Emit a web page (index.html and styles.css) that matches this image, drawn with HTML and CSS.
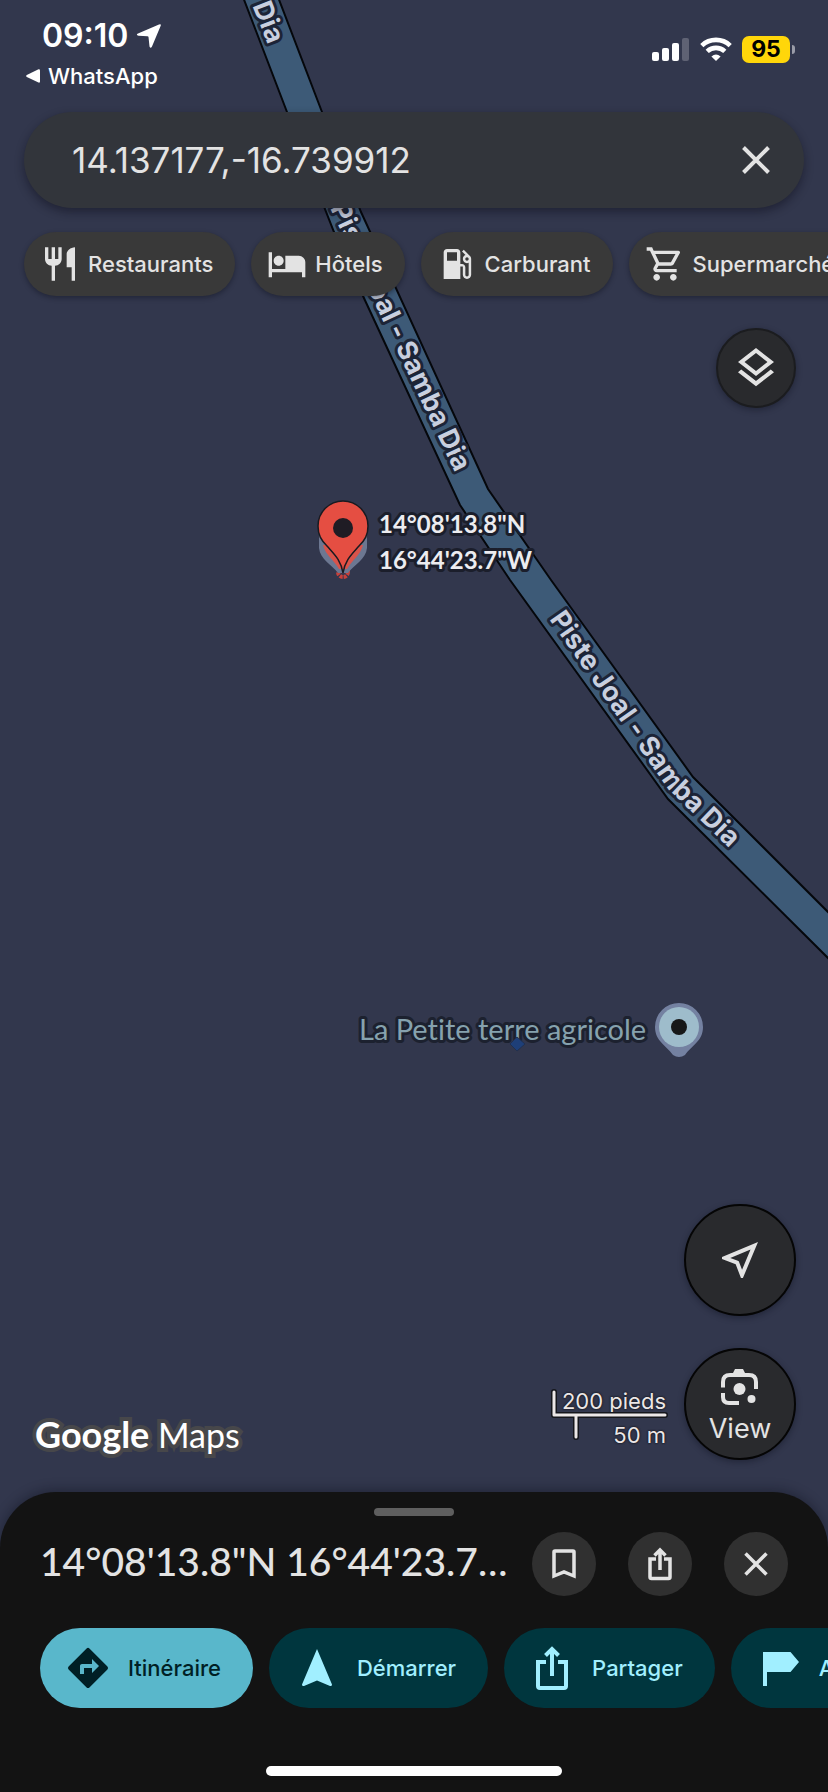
FILE: index.html
```html
<!DOCTYPE html>
<html lang="fr">
<head>
<meta charset="utf-8">
<meta name="viewport" content="width=device-width, initial-scale=1">
<title>Google Maps</title>
<link rel="stylesheet" href="styles.css">
</head>
<body>
<div class="screen">
  <svg class="map" viewBox="0 0 828 1792" preserveAspectRatio="xMinYMin slice" role="img" aria-label="Carte">
    <defs>
      <path id="road-a" d="M232 -46L268 45"/>
      <path id="road-b" d="M330 208L382 319L470 504"/>
      <path id="road-c" d="M549 619L619 719L668 789L748 866"/>
    </defs>
    <path class="road" d="M243 -3L287 112L334 232L363 296L460 505L510 580L668 799L832 962V916L693 777L551 580L488 489L361 212L322 112L278 -3Z"/>
    <text class="road-name"><textPath href="#road-a" startOffset="100%" text-anchor="end">Dia</textPath></text>
    <text class="road-name"><textPath href="#road-b">Piste Joal - Samba Dia</textPath></text>
    <text class="road-name"><textPath href="#road-c">Piste Joal - Samba Dia</textPath></text>

    <circle cx="343" cy="572" r="5" fill="none" stroke="#c8413c" stroke-width="4" stroke-dasharray="3 1"/>
    <path d="M319 536V548C320 559 332 565 338 573H348C354 565 366 559 367 548V536Z" fill="#6c7791"/>
    <path d="M323 545C326 556 334 560 339 569H347C352 560 360 556 363 545Z" fill="#d9534a"/>
    <path d="M343 573C341 560 334 554 327 546C321 540 318 535 318 526A25 25 0 0 1 368 526C368 535 365 540 359 546C352 554 345 560 343 573Z" fill="#e54e42" stroke="#191a20" stroke-width="1.5"/>
    <circle cx="343" cy="528" r="10" fill="#1f1c24"/>
    <text class="pin-name" x="379" y="533">14°08'13.8"N</text>
    <text class="pin-name" x="379" y="569">16°44'23.7"W</text>

    <text class="place-name" x="359" y="1040">La Petite terre agricole</text>
    <path d="M517 1037L525 1044L517 1051L510 1044Z" fill="#1e3f78" stroke="#21304f"/>
    <path d="M679 1003A24 24 0 0 1 703 1027C703 1041 692 1045 685 1055Q679 1059 673 1055C666 1045 655 1041 655 1027A24 24 0 0 1 679 1003Z" fill="#7481a1"/>
    <circle cx="679" cy="1027" r="20" fill="#9ebccb"/>
    <circle cx="679" cy="1027" r="8" fill="#171818"/>
  </svg>

  <header class="status">
    <div class="status-left">
      <div class="clock">09:10
        <svg width="26" height="26" viewBox="0 0 26 26" aria-hidden="true"><path d="M23 1.500Q25.500 .5 24.600 3L16 23.500Q14.500 26 13.500 23.500L12.500 14Q12.400 13.300 11.500 13.200L2.500 12.700Q-.5 12 2 10.600Z" fill="#fff"/></svg>
      </div>
      <a class="back" href="#"><svg width="14" height="14" viewBox="0 0 14 14" aria-hidden="true"><path d="M12.500 .3Q14 0 14 1.500V12.500Q14 14 12.500 13.500L.8 8Q-.5 7 .8 6Z" fill="#fff"/></svg>WhatsApp</a>
    </div>
    <div class="status-right">
      <svg width="38" height="24" viewBox="0 0 38 24" aria-hidden="true" fill="#fff"><rect x="0" y="15" width="7" height="9" rx="2"/><rect x="10" y="11" width="7" height="13" rx="2"/><rect x="20" y="6" width="7" height="18" rx="2"/><rect x="30" y="1" width="7" height="23" rx="2" opacity=".22"/></svg>
      <svg width="32" height="24" viewBox="0 0 32 24" aria-hidden="true"><g fill="none" stroke="#fff" stroke-width="4.600"><path d="M1.800 8.600A20.500 20.500 0 0 1 30.200 8.600"/><path d="M7.200 14.400A12.800 12.800 0 0 1 24.800 14.400"/></g><path d="M16 24L11.400 19.400Q16 15.800 20.600 19.400Z" fill="#fff"/></svg>
      <span class="battery">95</span>
    </div>
  </header>

  <form class="search">
    <input class="search-input" type="text" aria-label="Rechercher" value="14.137177,-16.739912">
    <button class="plain" type="button" aria-label="Effacer"><svg width="30" height="30" viewBox="0 0 30 30"><path d="M2.500 2.500L27.500 27.500M27.500 2.500L2.500 27.500" stroke="#e3e3e3" stroke-width="4"/></svg></button>
  </form>

  <nav class="chips" aria-label="Catégories">
    <button class="chip" type="button"><svg viewBox="0 0 24 24"><path d="M16 6v8h3v8h2V2c-2.760 0-5 2.240-5 4zm-5 3H9V2H7v7H5V2H3v7c0 2.210 1.790 4 4 4v9h2v-9c2.210 0 4-1.790 4-4V2h-2v7z"/></svg>Restaurants</button>
    <button class="chip" type="button"><svg viewBox="0 0 24 24"><path d="M7 13c1.660 0 3-1.340 3-3S8.660 7 7 7s-3 1.340-3 3 1.340 3 3 3zm12-6h-8v8H3V5H1v15h2v-3h18v3h2v-9c0-2.210-1.790-4-4-4z"/></svg>Hôtels</button>
    <button class="chip" type="button"><svg viewBox="0 0 24 24"><path d="M19.770 7.230l.01-.01-3.720-3.720L15 4.560l2.110 2.110c-.94.36-1.610 1.260-1.610 2.330 0 1.380 1.120 2.500 2.500 2.500.36 0 .69-.08 1-.21v7.210c0 .55-.45 1-1 1s-1-.45-1-1V14c0-1.100-.9-2-2-2h-1V5c0-1.100-.9-2-2-2H6c-1.100 0-2 .9-2 2v16h10v-7.500h1.500v5c0 1.380 1.120 2.500 2.500 2.500s2.500-1.120 2.500-2.500V9c0-.69-.28-1.320-.73-1.770zM12 10H6V5h6v5zm6 0c-.55 0-1-.45-1-1s.45-1 1-1 1 .45 1 1-.45 1-1 1z"/></svg>Carburant</button>
    <button class="chip" type="button"><svg viewBox="0 0 24 24"><path d="M15.550 13c.75 0 1.410-.41 1.750-1.030l3.580-6.490c.37-.66-.11-1.480-.87-1.480H5.210l-.94-2H1v2h2l3.600 7.590-1.350 2.440C4.520 15.370 5.480 17 7 17h12v-2H7l1.100-2h7.450zM6.160 6h12.150l-2.760 5H8.530L6.160 6zM7 18c-1.100 0-1.990.9-1.990 2S5.900 22 7 22s2-.9 2-2-.9-2-2-2zm10 0c-1.100 0-1.990.9-1.990 2s.89 2 1.990 2 2-.9 2-2-.9-2-2-2z"/></svg>Supermarchés</button>
  </nav>

  <div class="map-top">
    <button class="round round-small" type="button" aria-label="Calques"><svg width="48" height="48" viewBox="0 0 24 24"><path d="M11.990 18.540l-7.370-5.730L3 14.070l9 7 9-7-1.630-1.270-7.380 5.740zM12 16l7.360-5.730L21 9l-9-7-9 7 1.630 1.270L12 16zm0-11.470L17.740 9 12 13.470 6.260 9 12 4.530z"/></svg></button>
  </div>

  <div class="map-bottom">
    <svg class="logo" width="216" height="56" viewBox="0 0 216 56" role="img" aria-label="Google Maps">
      <text class="logo-google" x="7" y="40">Google</text>
      <text class="logo-maps" x="130" y="40">Maps</text>
    </svg>
    <div class="scale">
      <span class="scale-feet">200 pieds</span>
      <svg width="118" height="52" viewBox="0 0 118 52" aria-hidden="true"><g fill="none" stroke-linejoin="round" stroke-linecap="round"><path d="M4 4V27H115M26 27V49" stroke="#15161c" stroke-width="6"/><path d="M4 4V27H115M26 27V49" stroke="#ece7e7" stroke-width="3"/></g></svg>
      <span class="scale-metres">50 m</span>
    </div>
    <div class="map-buttons">
      <button class="round" type="button" aria-label="Ma position"><svg width="48" height="48" viewBox="0 0 24 24"><path d="M17.270 6.730l-4.240 10.130-1.320-3.420-.32-.83-.82-.32-3.430-1.330 10.130-4.230M21 3L3 10.530v.98l6.840 2.650L12.480 21h.98L21 3z"/></svg></button>
      <button class="round round-view" type="button"><svg width="38" height="38" viewBox="0 0 38 38"><path d="M2 18.500V13Q2 6 9 6H28Q35 6 35 13V20M2 24V28Q2 34 8 34H18" fill="none" stroke="#e3e3e3" stroke-width="4"/><path d="M11 6L14 0H22L25 6Z"/><circle cx="18.500" cy="20" r="6"/><circle cx="30.500" cy="30" r="4"/></svg>View</button>
    </div>
  </div>

  <section class="sheet">
    <div class="handle"></div>
    <div class="sheet-head">
      <h1 class="sheet-title">14°08'13.8"N 16°44'23.7"W</h1>
      <button class="sheet-icon" type="button" aria-label="Enregistrer"><svg width="24" height="32" viewBox="0 0 24 32"><path d="M2 28V4Q2 3 3 3H21Q22 3 22 4V28L12 24Z" fill="none" stroke="#e3e3e3" stroke-width="3.500"/></svg></button>
      <button class="sheet-icon" type="button" aria-label="Partager le lieu"><svg width="24" height="34" viewBox="0 0 24 34"><path d="M8 12H2V30Q2 31.500 3.500 31.500H20.500Q22 31.500 22 30V12H16M12 23V4M6.500 8.500L12 3L17.500 8.500" fill="none" stroke="#e3e3e3" stroke-width="3.500"/></svg></button>
      <button class="sheet-icon" type="button" aria-label="Fermer"><svg width="24" height="24" viewBox="0 0 24 24"><path d="M1.500 1.500L22.500 22.500M22.500 1.500L1.500 22.500" stroke="#e3e3e3" stroke-width="3.500"/></svg></button>
    </div>
    <div class="actions">
      <button class="action action-main" type="button"><svg viewBox="0 0 24 24"><path d="M21.710 11.290l-9-9a.996.996 0 0 0-1.410 0l-9 9a.996.996 0 0 0 0 1.410l9 9c.39.39 1.020.39 1.410 0l9-9a.996.996 0 0 0 0-1.410zM14 14.500V12h-4v3H8v-4c0-.55.45-1 1-1h5V7.500l3.500 3.500-3.500 3.500z"/></svg>Itinéraire</button>
      <button class="action" type="button"><svg viewBox="0 0 48 48"><path d="M24 5L39 40.500Q39 42.500 37 42L24 36.500L11 42Q9 42.500 9 40.500Z"/></svg>Démarrer</button>
      <button class="action" type="button"><svg viewBox="0 0 48 48"><path d="M18 18H10V42Q10 44 12 44H36Q38 44 38 42V18H30M24 32V6M17.500 11.500L24 5L30.500 11.500" fill="none" stroke="#a1efff" stroke-width="4"/></svg>Partager</button>
      <button class="action" type="button"><svg viewBox="0 0 48 48"><path d="M8 8H35.500L44 18L35.500 28H12V42H8Z"/></svg>Ajouter</button>
    </div>
    <div class="home-bar"></div>
  </section>
</div>
</body>
</html>
```
FILE: styles.css
```css
* { box-sizing: border-box; }

body {
  margin: 0;
  background: #131313;
  font-family: Inter, "Noto Sans", sans-serif;
  color: #e3e3e3;
}

button {
  border: 0;
  padding: 0;
  font: inherit;
  color: inherit;
  cursor: pointer;
}

.screen {
  position: relative;
  display: flex;
  flex-direction: column;
  min-height: 100vh;
  overflow: hidden;
  background: #32374d;
}

/* Map canvas, under all the controls */
.map {
  position: absolute;
  inset: 0;
  width: 100%;
  height: 100%;
}
.screen > :not(.map) { position: relative; }

.road { fill: #3d5a77; stroke: #05070b; stroke-width: 2; }
.map text {
  paint-order: stroke;
  stroke-linejoin: round;
  stroke-width: 6px;
  font-variant-ligatures: none;
}
.road-name { font-size: 27px; font-weight: 700; fill: #c8cfdf; stroke: #1c2437; }
.pin-name { font-family: Lato, sans-serif; font-size: 24px; font-weight: 700; fill: #ececf0; stroke: #1b1e2b; }
.place-name { font-family: Lato, sans-serif; font-size: 29px; font-weight: 400; fill: #86a2ae; stroke: #1c212f; }

/* Status bar */
.status {
  display: flex;
  justify-content: space-between;
  height: 112px;
  padding: 16px 38px 0 26px;
  color: #fff;
}
.status-left { display: flex; flex-direction: column; gap: 6px; }
.clock {
  display: flex;
  align-items: center;
  gap: 8px;
  padding-left: 16px;
  font-size: 32px;
  line-height: 40px;
  font-weight: 600;
}
.back {
  display: flex;
  align-items: center;
  gap: 8px;
  color: #fff;
  font-size: 22px;
  line-height: 28px;
  font-weight: 500;
  text-decoration: none;
}
.status-right { display: flex; align-items: center; gap: 10px; height: 66px; }
.battery {
  position: relative;
  width: 48px;
  height: 27px;
  border-radius: 7px;
  background: #ffd60a;
  color: #000;
  font-size: 23px;
  line-height: 27px;
  font-weight: 700;
  text-align: center;
}
.battery::after {
  content: "";
  position: absolute;
  right: -5px;
  top: 9px;
  width: 3px;
  height: 9px;
  border-radius: 0 4px 4px 0;
  background: #9a9ca8;
}

/* Search */
.search {
  display: flex;
  align-items: center;
  height: 96px;
  margin: 0 24px;
  padding: 0 33px 0 48px;
  border-radius: 48px;
  background: #32353b;
  box-shadow: 0 4px 10px rgba(10, 12, 24, .45);
}
.search-input {
  flex: 1;
  min-width: 0;
  border: 0;
  padding: 0;
  background: none;
  color: #e3e3e3;
  font: 400 35px/48px Inter, "Noto Sans", sans-serif;
  outline: 0;
}
.plain { display: flex; background: none; }

/* Category chips */
.chips { display: flex; gap: 16px; margin-top: 24px; padding-left: 24px; }
.chip {
  display: flex;
  flex: none;
  align-items: center;
  gap: 8px;
  height: 64px;
  padding: 0 22px 0 16px;
  border-radius: 32px;
  background: #393939;
  box-shadow: 0 2px 5px rgba(10, 12, 24, .4);
  font-size: 22px;
  font-weight: 500;
}
.chip svg { width: 40px; height: 40px; fill: #e3e3e3; }

/* Floating map buttons */
.map-top { display: flex; justify-content: flex-end; padding: 32px 32px 0; }
.round {
  display: flex;
  flex-direction: column;
  align-items: center;
  justify-content: center;
  width: 112px;
  height: 112px;
  border: 2px solid #050505;
  border-radius: 50%;
  background: #292a2d;
  box-shadow: 0 2px 6px rgba(10, 12, 24, .4);
  font-size: 27px;
  line-height: 40px;
}
.round svg { flex: none; fill: #e3e3e3; }
.round-small { width: 80px; height: 80px; border-color: #1b1c1f; }
.round-view { gap: 2px; padding-top: 10px; }

.map-bottom {
  display: flex;
  align-items: flex-end;
  margin-top: auto;
  padding: 0 32px 32px 28px;
}
.map-buttons { display: flex; flex-direction: column; gap: 32px; }

.logo { margin-bottom: -4px; overflow: visible; }
.logo text {
  font-family: Lato, sans-serif;
  fill: #fff;
  stroke: #47474a;
  stroke-width: 8px;
  paint-order: stroke;
}
.logo-google { font-size: 36px; font-weight: 700; }
.logo-maps { font-size: 34px; font-weight: 400; }

.scale {
  display: flex;
  flex-direction: column;
  align-items: flex-end;
  margin-left: auto;
  margin-right: 16px;
  margin-bottom: 12px;
  font-size: 22px;
  line-height: 26px;
  color: #ece7e7;
  text-shadow: 0 0 2px #15161c, 0 0 2px #15161c;
}
.scale svg { margin: -26px 0; }
.scale span { padding-right: 2px; }
.scale-metres { margin-top: 8px; }

/* Bottom sheet */
.sheet {
  display: flex;
  flex-direction: column;
  height: 300px;
  padding: 16px 0;
  border-radius: 56px 56px 0 0;
  background: #131313;
  box-shadow: 0 -2px 12px rgba(10, 12, 24, .4);
}
.handle {
  align-self: center;
  width: 80px;
  height: 8px;
  border-radius: 4px;
  background: #5f5f5f;
}
.sheet-head {
  display: flex;
  align-items: center;
  gap: 32px;
  margin-top: 16px;
  padding: 0 40px;
}
.sheet-title {
  flex: 1;
  min-width: 0;
  margin: 0 -12px 6px 0;
  overflow: hidden;
  white-space: nowrap;
  text-overflow: ellipsis;
  font-family: Lato, sans-serif;
  font-size: 39px;
  line-height: 52px;
  font-weight: 500;
}
.sheet-icon {
  display: flex;
  flex: none;
  align-items: center;
  justify-content: center;
  width: 64px;
  height: 64px;
  border-radius: 50%;
  background: #303030;
}
.actions { display: flex; gap: 16px; margin-top: 32px; padding-left: 40px; }
.action {
  display: flex;
  flex: none;
  align-items: center;
  gap: 16px;
  height: 80px;
  padding: 0 32px 0 24px;
  border-radius: 40px;
  background: #00363e;
  color: #a1efff;
  font-size: 22px;
  font-weight: 500;
}
.action svg { width: 48px; height: 48px; fill: #a1efff; }
.action-main { background: #59b7cb; color: #001f25; }
.action-main svg { fill: #001f25; }
.home-bar {
  align-self: center;
  width: 296px;
  height: 10px;
  margin-top: auto;
  border-radius: 5px;
  background: #fff;
}
```
